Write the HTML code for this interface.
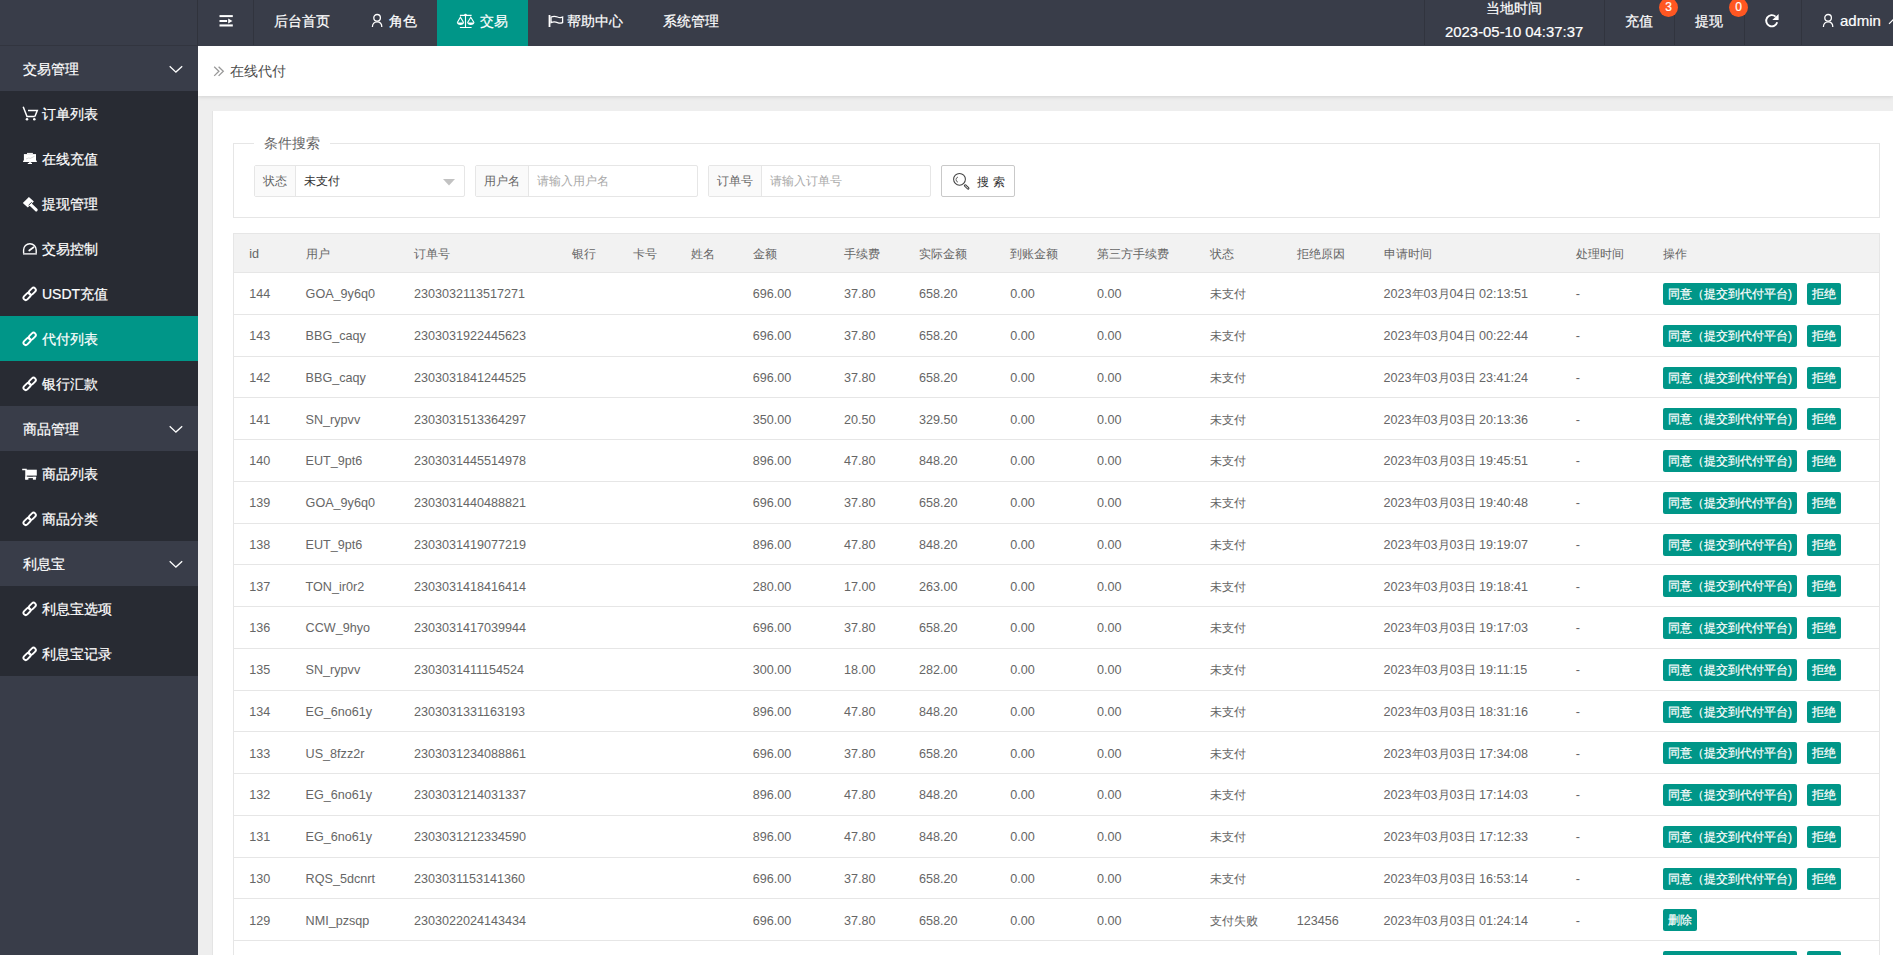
<!DOCTYPE html>
<html><head><meta charset="utf-8"><style>
*{margin:0;padding:0;box-sizing:border-box}
html,body{width:1893px;height:955px;overflow:hidden}
body{position:relative;background:#eeeeee;font-family:"Liberation Sans",sans-serif;color:#333}
#hdr,.sg,.si,.btn,.badge{-webkit-text-stroke:0.2px #fff}
.abs{position:absolute}
#hdr{position:absolute;left:0;top:0;width:1893px;height:46px;background:#393d49}
#logo{position:absolute;left:0;top:0;width:198px;height:46px;background:#393d49;border-bottom:1px solid #32353f}
.hv{position:absolute;top:0;width:1px;height:45px;background:#31343e}
.hm{position:absolute;top:0;height:46px;line-height:43px;color:#fff;font-size:14px;white-space:nowrap}
.hm svg{position:absolute}
#side{position:absolute;left:0;top:46px;width:198px;height:909px;background:#393d49}
.sg{position:absolute;left:0;width:198px;height:45px;background:#393d49}
.sg .st{position:absolute;left:23px;top:1px;line-height:45px;font-size:14px;color:#fff}
.sg .chev{position:absolute;left:168px;top:19px}
.si{position:absolute;left:0;width:198px;height:45px;background:#282b33}
.si.act{background:#009688}
.si .ic{position:absolute;left:23px;top:16px}
.si .st2{position:absolute;left:42px;top:1px;line-height:45px;font-size:14px;color:#fff}
#crumb{position:absolute;left:198px;top:46px;width:1695px;height:50px;background:#fff;box-shadow:0 1px 4px rgba(0,0,0,.12)}
#crumb .t{position:absolute;left:32px;top:0;line-height:50px;font-size:14px;color:#4d4d4d}
#card{position:absolute;left:213px;top:111px;width:1700px;height:900px;background:#fff;box-shadow:-1px 0 0 #e4e4e4}
#fs{position:absolute;left:233px;top:143px;width:1647px;height:75px;border:1px solid #e6e6e6}
#legend{position:absolute;left:254px;top:134px;width:76px;height:18px;background:#fff;font-size:14px;color:#666;line-height:18px;padding-left:10px}
.ig{position:absolute;top:165px;height:32px;border:1px solid #e6e6e6;border-radius:2px;background:#fff}
.ig .lb{position:absolute;left:0;top:0;height:30px;background:#fafafa;border-right:1px solid #e6e6e6;font-size:12px;color:#666;line-height:30px;text-align:center}
.ig .vl{position:absolute;top:0;line-height:30px;font-size:12px;white-space:nowrap}
#sbtn{position:absolute;left:941px;top:165px;width:74px;height:32px;border:1px solid #c9c9c9;border-radius:2px;background:#fff;font-size:12.6px;color:#333;line-height:30px}
.thead{position:absolute;left:233px;top:233px;width:1647px;height:40px;background:#f2f2f2;border:1px solid #e6e6e6}
#tbody{position:absolute;left:233px;top:272px;width:1647px;height:700px;border-left:1px solid #e6e6e6;border-right:1px solid #e6e6e6}
.th{position:absolute;top:243.5px;line-height:20px;font-size:12.6px;color:#666;white-space:nowrap}
.td{position:absolute;line-height:20px;font-size:12.6px;color:#666;white-space:nowrap}
.th .c,.td .c{font-size:11.7px}
.rowline{position:absolute;left:233px;width:1647px;height:1px;background:#e6e6e6}
.btn{position:absolute;height:22px;line-height:22px;padding:0 5px;background:#009688;color:#fff;font-size:12px;border-radius:2px;white-space:nowrap}
.b1{width:134px}
.b2{width:33.7px}
.badge{position:absolute;width:19px;height:19px;border-radius:50%;background:#ff5722;color:#fff;font-size:12px;line-height:19px;text-align:center}
</style></head><body>
<div id="card"></div>
<div id="crumb"><svg class="abs" style="left:14px;top:18px" width="14" height="14" viewBox="0 0 14 14"><path d="M2.2 2.7 L6.9 7.3 L2.2 11.9 M6.6 2.7 L11.3 7.3 L6.6 11.9" fill="none" stroke="#999" stroke-width="1.3"/></svg><span class="t">在线代付</span></div>
<div id="hdr">
 <div id="logo"></div>
 <div class="hv" style="left:197px"></div>
 <div class="hv" style="left:253px"></div>
 <svg class="abs" style="left:219px;top:15px" width="15" height="13" viewBox="0 0 15 13"><rect x="0.5" y="0.1" width="13.3" height="2" fill="#fff"/><rect x="0.5" y="5" width="7.6" height="2" fill="#fff"/><path d="M9.2 3.6 L13.5 6 L9.2 8.4 Z" fill="#fff"/><rect x="0.5" y="9.4" width="13.3" height="2.1" fill="#fff"/></svg>
 <div class="hm" style="left:274px">后台首页</div>
 <svg class="abs" style="left:370px;top:12px" width="15" height="16" viewBox="0 0 15 16"><circle cx="7.1" cy="5.8" r="3.3" fill="none" stroke="#fff" stroke-width="1.3"/><path d="M2.4 15 C2.4 11.6 4.4 9.8 7.1 9.8 C9.8 9.8 11.8 11.6 11.8 15" fill="none" stroke="#fff" stroke-width="1.3"/></svg>
 <div class="hm" style="left:389px">角色</div>
 <div class="abs" style="left:437px;top:0;width:91px;height:46px;background:#009688"></div>
 <svg class="abs" style="left:455px;top:12px" width="22" height="18" viewBox="0 0 22 18"><g fill="none" stroke="#fff" stroke-width="1.1"><path d="M10.5 3 V15.5 M4.9 15.5 H16.6 M4.9 3.4 H16.6"/><path d="M2.2 10.7 L5.4 5.2 L8.7 10.7"/><path d="M12.5 10.7 L15.8 5.2 L19.1 10.7"/></g><path d="M2 10.6 A3.45 2.3 0 0 0 8.9 10.6 Z M12.3 10.6 A3.45 2.3 0 0 0 19.3 10.6 Z" fill="#fff"/><circle cx="10.5" cy="3.1" r="1.3" fill="#fff"/></svg>
 <div class="hm" style="left:480px">交易</div>
 <svg class="abs" style="left:546px;top:12px" width="20" height="18" viewBox="0 0 20 18"><path d="M3.5 3 V15" stroke="#fff" stroke-width="1.8"/><path d="M5 5 C7.5 4 9.5 4.2 11.5 5 C13.5 5.8 15 5.8 16.6 5 V10.6 C15 11.4 13.5 11.4 11.5 10.6 C9.5 9.8 7.5 9.6 5 10.6 Z" fill="none" stroke="#fff" stroke-width="1.3"/></svg>
 <div class="hm" style="left:567px">帮助中心</div>
 <div class="hm" style="left:663px">系统管理</div>
 <div class="hv" style="left:1424px"></div>
 <div class="abs" style="left:1486px;top:0px;font-size:14px;color:#fff;line-height:16px">当地时间</div>
 <div class="abs" style="left:1445px;top:23px;font-size:14.9px;color:#fff;line-height:18px;white-space:nowrap">2023-05-10 04:37:37</div>
 <div class="hv" style="left:1604px"></div>
 <div class="hm" style="left:1625px">充值</div>
 <div class="hv" style="left:1674px"></div>
 <div class="hm" style="left:1695px">提现</div>
 <div class="hv" style="left:1744px"></div>
 <svg class="abs" style="left:1762px;top:10px" width="20" height="20" viewBox="0 0 20 20"><path d="M13.6 6.6 A5.6 5.6 0 1 0 15.2 12.2" fill="none" stroke="#fff" stroke-width="1.9"/><path d="M16.6 3.9 V10 H10.3 Z" fill="#fff"/></svg>
 <div class="hv" style="left:1801px"></div>
 <svg class="abs" style="left:1821px;top:12px" width="15" height="16" viewBox="0 0 15 16"><circle cx="7.1" cy="5.8" r="3.3" fill="none" stroke="#fff" stroke-width="1.3"/><path d="M2.4 15 C2.4 11.6 4.4 9.8 7.1 9.8 C9.8 9.8 11.8 11.6 11.8 15" fill="none" stroke="#fff" stroke-width="1.3"/></svg>
 <div class="hm" style="left:1840px;top:-1px;font-size:15px">admin</div>
 <svg class="abs" style="left:1888px;top:18px" width="8" height="8" viewBox="0 0 8 8"><path d="M1 5.8 L5 1.8 L9 5.8" fill="none" stroke="#fff" stroke-width="1.2"/></svg>
 <div class="badge" style="left:1659px;top:-2.5px">3</div>
 <div class="badge" style="left:1729px;top:-2.5px">0</div>
</div>
<div id="side">

</div>

<div id="sidewrap" class="abs" style="left:0;top:0">
<div class="sg" style="top:46px"><span class="st">交易管理</span><svg class="chev" width="16" height="10" viewBox="0 0 16 10"><path d="M1.7 1.3 L7.9 7.1 L14.2 1.3" fill="none" stroke="#fff" stroke-width="1.3"/></svg></div><div class="si" style="top:91px"><svg class="ic" style="left:21px;top:12px" width="18" height="19" viewBox="0 0 18 19"><g fill="none" stroke="#fff" stroke-width="1.5"><path d="M2.2 3.8 L6 13.6 H13.8"/><path d="M7 7.4 H16.3 L13.9 13.6"/></g><circle cx="6" cy="16.3" r="1.3" fill="#fff"/><circle cx="13.3" cy="16.3" r="1.3" fill="#fff"/></svg><span class="st2">订单列表</span></div><div class="si" style="top:136px"><svg class="ic" style="left:21px;top:12px" width="18" height="18" viewBox="0 0 18 18"><rect x="2.9" y="6.1" width="12.1" height="7.2" fill="#fff"/><rect x="6" y="4.9" width="5.9" height="1.4" fill="#eee"/><rect x="2.1" y="12.6" width="13.7" height="1.4" fill="#fff"/><rect x="7.9" y="13.8" width="2.3" height="1.3" fill="#ddd"/><rect x="6.8" y="15" width="4.2" height="1" fill="#fff"/><path d="M5 11 L7.5 10 L9.5 10.3 L13.5 8.3" fill="none" stroke="#bbb" stroke-width="0.6"/></svg><span class="st2">在线充值</span></div><div class="si" style="top:181px"><svg class="ic" style="left:18px;top:12px" width="22" height="20" viewBox="0 0 22 20"><path d="M4.8 10 L10.9 4 L15.9 8.6 L9.8 14.4 Z" fill="#fff"/><path d="M12.2 11.2 L18.2 16.9" stroke="#fff" stroke-width="3" stroke-linecap="round"/><path d="M10.6 12.2 L13.8 9.2" stroke="#282b33" stroke-width="0.9"/></svg><span class="st2">提现管理</span></div><div class="si" style="top:226px"><svg class="ic" style="left:18px;top:12px" width="22" height="20" viewBox="0 0 22 20"><path d="M5.6 15.6 V12 A6.3 6.3 0 0 1 18.2 12 V15.6" fill="none" stroke="#fff" stroke-width="1.4"/><rect x="5" y="15" width="13.9" height="1.7" fill="#cfcfd2"/><path d="M11.2 12.5 L15.6 9.2" stroke="#fff" stroke-width="1.7" stroke-linecap="round"/></svg><span class="st2">交易控制</span></div><div class="si" style="top:271px"><svg class="ic" style="left:21px;top:13px" width="18" height="18" viewBox="0 0 18 18"><g fill="none" stroke="#fff" stroke-width="1.9"><rect x="-4.05" y="-2.25" width="8.1" height="4.5" rx="2.25" transform="translate(11.27 7.23) rotate(-45)"/><rect x="-4.05" y="-2.25" width="8.1" height="4.5" rx="2.25" transform="translate(6.03 12.47) rotate(-45)"/></g></svg><span class="st2">USDT充值</span></div><div class="si act" style="top:316px"><svg class="ic" style="left:21px;top:13px" width="18" height="18" viewBox="0 0 18 18"><g fill="none" stroke="#fff" stroke-width="1.9"><rect x="-4.05" y="-2.25" width="8.1" height="4.5" rx="2.25" transform="translate(11.27 7.23) rotate(-45)"/><rect x="-4.05" y="-2.25" width="8.1" height="4.5" rx="2.25" transform="translate(6.03 12.47) rotate(-45)"/></g></svg><span class="st2">代付列表</span></div><div class="si" style="top:361px"><svg class="ic" style="left:21px;top:13px" width="18" height="18" viewBox="0 0 18 18"><g fill="none" stroke="#fff" stroke-width="1.9"><rect x="-4.05" y="-2.25" width="8.1" height="4.5" rx="2.25" transform="translate(11.27 7.23) rotate(-45)"/><rect x="-4.05" y="-2.25" width="8.1" height="4.5" rx="2.25" transform="translate(6.03 12.47) rotate(-45)"/></g></svg><span class="st2">银行汇款</span></div><div class="sg" style="top:406px"><span class="st">商品管理</span><svg class="chev" width="16" height="10" viewBox="0 0 16 10"><path d="M1.7 1.3 L7.9 7.1 L14.2 1.3" fill="none" stroke="#fff" stroke-width="1.3"/></svg></div><div class="si" style="top:451px"><svg class="ic" style="left:18px;top:12px" width="22" height="20" viewBox="0 0 22 20"><path d="M4.2 6.4 H8 V16.6" fill="none" stroke="#fff" stroke-width="1.5"/><rect x="8" y="6.7" width="10.8" height="5.9" fill="#fff"/><rect x="8" y="13.8" width="10.2" height="1.3" fill="#fff"/><rect x="7.3" y="13.8" width="3.1" height="2.9" fill="#fff"/><rect x="14.9" y="13.8" width="3" height="2.9" fill="#fff"/></svg><span class="st2">商品列表</span></div><div class="si" style="top:496px"><svg class="ic" style="left:21px;top:13px" width="18" height="18" viewBox="0 0 18 18"><g fill="none" stroke="#fff" stroke-width="1.9"><rect x="-4.05" y="-2.25" width="8.1" height="4.5" rx="2.25" transform="translate(11.27 7.23) rotate(-45)"/><rect x="-4.05" y="-2.25" width="8.1" height="4.5" rx="2.25" transform="translate(6.03 12.47) rotate(-45)"/></g></svg><span class="st2">商品分类</span></div><div class="sg" style="top:541px"><span class="st">利息宝</span><svg class="chev" width="16" height="10" viewBox="0 0 16 10"><path d="M1.7 1.3 L7.9 7.1 L14.2 1.3" fill="none" stroke="#fff" stroke-width="1.3"/></svg></div><div class="si" style="top:586px"><svg class="ic" style="left:21px;top:13px" width="18" height="18" viewBox="0 0 18 18"><g fill="none" stroke="#fff" stroke-width="1.9"><rect x="-4.05" y="-2.25" width="8.1" height="4.5" rx="2.25" transform="translate(11.27 7.23) rotate(-45)"/><rect x="-4.05" y="-2.25" width="8.1" height="4.5" rx="2.25" transform="translate(6.03 12.47) rotate(-45)"/></g></svg><span class="st2">利息宝选项</span></div><div class="si" style="top:631px"><svg class="ic" style="left:21px;top:13px" width="18" height="18" viewBox="0 0 18 18"><g fill="none" stroke="#fff" stroke-width="1.9"><rect x="-4.05" y="-2.25" width="8.1" height="4.5" rx="2.25" transform="translate(11.27 7.23) rotate(-45)"/><rect x="-4.05" y="-2.25" width="8.1" height="4.5" rx="2.25" transform="translate(6.03 12.47) rotate(-45)"/></g></svg><span class="st2">利息宝记录</span></div>
</div>
<div class="abs" style="left:197px;top:0;width:1px;height:46px;background:#30333c"></div>
<div id="fs"></div>
<div id="legend">条件搜索</div>
<div class="ig" style="left:254px;width:211px"><div class="lb" style="width:41px">状态</div><div class="vl" style="left:49px;color:#333">未支付</div>
 <svg class="abs" style="left:188px;top:12.5px" width="12" height="7" viewBox="0 0 12 7"><path d="M0 0 H12 L6 6.5 Z" fill="#c2c2c2"/></svg></div>
<div class="ig" style="left:475px;width:223px"><div class="lb" style="width:53px">用户名</div><div class="vl" style="left:61px;color:#a9a9a9">请输入用户名</div></div>
<div class="ig" style="left:708px;width:223px"><div class="lb" style="width:53px">订单号</div><div class="vl" style="left:61px;color:#a9a9a9">请输入订单号</div></div>
<div id="sbtn"><svg class="abs" style="left:8px;top:4px" width="22" height="22" viewBox="0 0 22 22"><circle cx="9.5" cy="9.3" r="5.9" fill="none" stroke="#444" stroke-width="1.05"/><path d="M15.2 15.6 L18.1 18.3" stroke="#444" stroke-width="2.7" stroke-linecap="round"/><path d="M15.4 15.8 L17.9 18.1" stroke="#fff" stroke-width="0.9" stroke-linecap="round"/><path d="M8 7 A2.7 2.7 0 0 0 8 12.2" fill="none" stroke="#555" stroke-width="0.9"/></svg><span class="abs" style="left:34.5px;top:0.5px;letter-spacing:4px;font-size:12px">搜索</span></div>
<div id="tbody"></div>
<div class="thead"></div><div class="th" style="left:249.3px">id</div><div class="th" style="left:305.6px"><span class="c">用户</span></div><div class="th" style="left:413.9px"><span class="c">订单号</span></div><div class="th" style="left:571.8px"><span class="c">银行</span></div><div class="th" style="left:632.5px"><span class="c">卡号</span></div><div class="th" style="left:691.2px"><span class="c">姓名</span></div><div class="th" style="left:752.7px"><span class="c">金额</span></div><div class="th" style="left:843.9px"><span class="c">手续费</span></div><div class="th" style="left:919.1px"><span class="c">实际金额</span></div><div class="th" style="left:1010.3px"><span class="c">到账金额</span></div><div class="th" style="left:1096.9px"><span class="c">第三方手续费</span></div><div class="th" style="left:1209.7px"><span class="c">状态</span></div><div class="th" style="left:1296.8px"><span class="c">拒绝原因</span></div><div class="th" style="left:1383.5px"><span class="c">申请时间</span></div><div class="th" style="left:1575.8px"><span class="c">处理时间</span></div><div class="th" style="left:1662.9px"><span class="c">操作</span></div><div class="rowline" style="top:314px"></div><div class="td" style="left:249.3px;top:284px">144</div><div class="td" style="left:305.6px;top:284px">GOA_9y6q0</div><div class="td" style="left:413.9px;top:284px">2303032113517271</div><div class="td" style="left:752.7px;top:284px">696.00</div><div class="td" style="left:843.9px;top:284px">37.80</div><div class="td" style="left:919.1px;top:284px">658.20</div><div class="td" style="left:1010.3px;top:284px">0.00</div><div class="td" style="left:1096.9px;top:284px">0.00</div><div class="td" style="left:1209.7px;top:284px"><span class="c">未支付</span></div><div class="td" style="left:1383.5px;top:284px">2023<span class="c">年</span>03<span class="c">月</span>04<span class="c">日</span> 02:13:51</div><div class="td" style="left:1575.8px;top:284px">-</div><div class="btn b1" style="left:1662.9px;top:283.30px">同意（提交到代付平台)</div><div class="btn b2" style="left:1807px;top:283.30px">拒绝</div><div class="rowline" style="top:356px"></div><div class="td" style="left:249.3px;top:326px">143</div><div class="td" style="left:305.6px;top:326px">BBG_caqy</div><div class="td" style="left:413.9px;top:326px">2303031922445623</div><div class="td" style="left:752.7px;top:326px">696.00</div><div class="td" style="left:843.9px;top:326px">37.80</div><div class="td" style="left:919.1px;top:326px">658.20</div><div class="td" style="left:1010.3px;top:326px">0.00</div><div class="td" style="left:1096.9px;top:326px">0.00</div><div class="td" style="left:1209.7px;top:326px"><span class="c">未支付</span></div><div class="td" style="left:1383.5px;top:326px">2023<span class="c">年</span>03<span class="c">月</span>04<span class="c">日</span> 00:22:44</div><div class="td" style="left:1575.8px;top:326px">-</div><div class="btn b1" style="left:1662.9px;top:325.30px">同意（提交到代付平台)</div><div class="btn b2" style="left:1807px;top:325.30px">拒绝</div><div class="rowline" style="top:397px"></div><div class="td" style="left:249.3px;top:368px">142</div><div class="td" style="left:305.6px;top:368px">BBG_caqy</div><div class="td" style="left:413.9px;top:368px">2303031841244525</div><div class="td" style="left:752.7px;top:368px">696.00</div><div class="td" style="left:843.9px;top:368px">37.80</div><div class="td" style="left:919.1px;top:368px">658.20</div><div class="td" style="left:1010.3px;top:368px">0.00</div><div class="td" style="left:1096.9px;top:368px">0.00</div><div class="td" style="left:1209.7px;top:368px"><span class="c">未支付</span></div><div class="td" style="left:1383.5px;top:368px">2023<span class="c">年</span>03<span class="c">月</span>03<span class="c">日</span> 23:41:24</div><div class="td" style="left:1575.8px;top:368px">-</div><div class="btn b1" style="left:1662.9px;top:366.80px">同意（提交到代付平台)</div><div class="btn b2" style="left:1807px;top:366.80px">拒绝</div><div class="rowline" style="top:439px"></div><div class="td" style="left:249.3px;top:410px">141</div><div class="td" style="left:305.6px;top:410px">SN_rypvv</div><div class="td" style="left:413.9px;top:410px">2303031513364297</div><div class="td" style="left:752.7px;top:410px">350.00</div><div class="td" style="left:843.9px;top:410px">20.50</div><div class="td" style="left:919.1px;top:410px">329.50</div><div class="td" style="left:1010.3px;top:410px">0.00</div><div class="td" style="left:1096.9px;top:410px">0.00</div><div class="td" style="left:1209.7px;top:410px"><span class="c">未支付</span></div><div class="td" style="left:1383.5px;top:410px">2023<span class="c">年</span>03<span class="c">月</span>03<span class="c">日</span> 20:13:36</div><div class="td" style="left:1575.8px;top:410px">-</div><div class="btn b1" style="left:1662.9px;top:408.30px">同意（提交到代付平台)</div><div class="btn b2" style="left:1807px;top:408.30px">拒绝</div><div class="rowline" style="top:481px"></div><div class="td" style="left:249.3px;top:451px">140</div><div class="td" style="left:305.6px;top:451px">EUT_9pt6</div><div class="td" style="left:413.9px;top:451px">2303031445514978</div><div class="td" style="left:752.7px;top:451px">896.00</div><div class="td" style="left:843.9px;top:451px">47.80</div><div class="td" style="left:919.1px;top:451px">848.20</div><div class="td" style="left:1010.3px;top:451px">0.00</div><div class="td" style="left:1096.9px;top:451px">0.00</div><div class="td" style="left:1209.7px;top:451px"><span class="c">未支付</span></div><div class="td" style="left:1383.5px;top:451px">2023<span class="c">年</span>03<span class="c">月</span>03<span class="c">日</span> 19:45:51</div><div class="td" style="left:1575.8px;top:451px">-</div><div class="btn b1" style="left:1662.9px;top:450.30px">同意（提交到代付平台)</div><div class="btn b2" style="left:1807px;top:450.30px">拒绝</div><div class="rowline" style="top:523px"></div><div class="td" style="left:249.3px;top:493px">139</div><div class="td" style="left:305.6px;top:493px">GOA_9y6q0</div><div class="td" style="left:413.9px;top:493px">2303031440488821</div><div class="td" style="left:752.7px;top:493px">696.00</div><div class="td" style="left:843.9px;top:493px">37.80</div><div class="td" style="left:919.1px;top:493px">658.20</div><div class="td" style="left:1010.3px;top:493px">0.00</div><div class="td" style="left:1096.9px;top:493px">0.00</div><div class="td" style="left:1209.7px;top:493px"><span class="c">未支付</span></div><div class="td" style="left:1383.5px;top:493px">2023<span class="c">年</span>03<span class="c">月</span>03<span class="c">日</span> 19:40:48</div><div class="td" style="left:1575.8px;top:493px">-</div><div class="btn b1" style="left:1662.9px;top:492.30px">同意（提交到代付平台)</div><div class="btn b2" style="left:1807px;top:492.30px">拒绝</div><div class="rowline" style="top:564px"></div><div class="td" style="left:249.3px;top:535px">138</div><div class="td" style="left:305.6px;top:535px">EUT_9pt6</div><div class="td" style="left:413.9px;top:535px">2303031419077219</div><div class="td" style="left:752.7px;top:535px">896.00</div><div class="td" style="left:843.9px;top:535px">47.80</div><div class="td" style="left:919.1px;top:535px">848.20</div><div class="td" style="left:1010.3px;top:535px">0.00</div><div class="td" style="left:1096.9px;top:535px">0.00</div><div class="td" style="left:1209.7px;top:535px"><span class="c">未支付</span></div><div class="td" style="left:1383.5px;top:535px">2023<span class="c">年</span>03<span class="c">月</span>03<span class="c">日</span> 19:19:07</div><div class="td" style="left:1575.8px;top:535px">-</div><div class="btn b1" style="left:1662.9px;top:533.80px">同意（提交到代付平台)</div><div class="btn b2" style="left:1807px;top:533.80px">拒绝</div><div class="rowline" style="top:606px"></div><div class="td" style="left:249.3px;top:577px">137</div><div class="td" style="left:305.6px;top:577px">TON_ir0r2</div><div class="td" style="left:413.9px;top:577px">2303031418416414</div><div class="td" style="left:752.7px;top:577px">280.00</div><div class="td" style="left:843.9px;top:577px">17.00</div><div class="td" style="left:919.1px;top:577px">263.00</div><div class="td" style="left:1010.3px;top:577px">0.00</div><div class="td" style="left:1096.9px;top:577px">0.00</div><div class="td" style="left:1209.7px;top:577px"><span class="c">未支付</span></div><div class="td" style="left:1383.5px;top:577px">2023<span class="c">年</span>03<span class="c">月</span>03<span class="c">日</span> 19:18:41</div><div class="td" style="left:1575.8px;top:577px">-</div><div class="btn b1" style="left:1662.9px;top:575.30px">同意（提交到代付平台)</div><div class="btn b2" style="left:1807px;top:575.30px">拒绝</div><div class="rowline" style="top:648px"></div><div class="td" style="left:249.3px;top:618px">136</div><div class="td" style="left:305.6px;top:618px">CCW_9hyo</div><div class="td" style="left:413.9px;top:618px">2303031417039944</div><div class="td" style="left:752.7px;top:618px">696.00</div><div class="td" style="left:843.9px;top:618px">37.80</div><div class="td" style="left:919.1px;top:618px">658.20</div><div class="td" style="left:1010.3px;top:618px">0.00</div><div class="td" style="left:1096.9px;top:618px">0.00</div><div class="td" style="left:1209.7px;top:618px"><span class="c">未支付</span></div><div class="td" style="left:1383.5px;top:618px">2023<span class="c">年</span>03<span class="c">月</span>03<span class="c">日</span> 19:17:03</div><div class="td" style="left:1575.8px;top:618px">-</div><div class="btn b1" style="left:1662.9px;top:617.30px">同意（提交到代付平台)</div><div class="btn b2" style="left:1807px;top:617.30px">拒绝</div><div class="rowline" style="top:690px"></div><div class="td" style="left:249.3px;top:660px">135</div><div class="td" style="left:305.6px;top:660px">SN_rypvv</div><div class="td" style="left:413.9px;top:660px">2303031411154524</div><div class="td" style="left:752.7px;top:660px">300.00</div><div class="td" style="left:843.9px;top:660px">18.00</div><div class="td" style="left:919.1px;top:660px">282.00</div><div class="td" style="left:1010.3px;top:660px">0.00</div><div class="td" style="left:1096.9px;top:660px">0.00</div><div class="td" style="left:1209.7px;top:660px"><span class="c">未支付</span></div><div class="td" style="left:1383.5px;top:660px">2023<span class="c">年</span>03<span class="c">月</span>03<span class="c">日</span> 19:11:15</div><div class="td" style="left:1575.8px;top:660px">-</div><div class="btn b1" style="left:1662.9px;top:659.30px">同意（提交到代付平台)</div><div class="btn b2" style="left:1807px;top:659.30px">拒绝</div><div class="rowline" style="top:731px"></div><div class="td" style="left:249.3px;top:702px">134</div><div class="td" style="left:305.6px;top:702px">EG_6no61y</div><div class="td" style="left:413.9px;top:702px">2303031331163193</div><div class="td" style="left:752.7px;top:702px">896.00</div><div class="td" style="left:843.9px;top:702px">47.80</div><div class="td" style="left:919.1px;top:702px">848.20</div><div class="td" style="left:1010.3px;top:702px">0.00</div><div class="td" style="left:1096.9px;top:702px">0.00</div><div class="td" style="left:1209.7px;top:702px"><span class="c">未支付</span></div><div class="td" style="left:1383.5px;top:702px">2023<span class="c">年</span>03<span class="c">月</span>03<span class="c">日</span> 18:31:16</div><div class="td" style="left:1575.8px;top:702px">-</div><div class="btn b1" style="left:1662.9px;top:700.80px">同意（提交到代付平台)</div><div class="btn b2" style="left:1807px;top:700.80px">拒绝</div><div class="rowline" style="top:773px"></div><div class="td" style="left:249.3px;top:744px">133</div><div class="td" style="left:305.6px;top:744px">US_8fzz2r</div><div class="td" style="left:413.9px;top:744px">2303031234088861</div><div class="td" style="left:752.7px;top:744px">696.00</div><div class="td" style="left:843.9px;top:744px">37.80</div><div class="td" style="left:919.1px;top:744px">658.20</div><div class="td" style="left:1010.3px;top:744px">0.00</div><div class="td" style="left:1096.9px;top:744px">0.00</div><div class="td" style="left:1209.7px;top:744px"><span class="c">未支付</span></div><div class="td" style="left:1383.5px;top:744px">2023<span class="c">年</span>03<span class="c">月</span>03<span class="c">日</span> 17:34:08</div><div class="td" style="left:1575.8px;top:744px">-</div><div class="btn b1" style="left:1662.9px;top:742.30px">同意（提交到代付平台)</div><div class="btn b2" style="left:1807px;top:742.30px">拒绝</div><div class="rowline" style="top:815px"></div><div class="td" style="left:249.3px;top:785px">132</div><div class="td" style="left:305.6px;top:785px">EG_6no61y</div><div class="td" style="left:413.9px;top:785px">2303031214031337</div><div class="td" style="left:752.7px;top:785px">896.00</div><div class="td" style="left:843.9px;top:785px">47.80</div><div class="td" style="left:919.1px;top:785px">848.20</div><div class="td" style="left:1010.3px;top:785px">0.00</div><div class="td" style="left:1096.9px;top:785px">0.00</div><div class="td" style="left:1209.7px;top:785px"><span class="c">未支付</span></div><div class="td" style="left:1383.5px;top:785px">2023<span class="c">年</span>03<span class="c">月</span>03<span class="c">日</span> 17:14:03</div><div class="td" style="left:1575.8px;top:785px">-</div><div class="btn b1" style="left:1662.9px;top:784.30px">同意（提交到代付平台)</div><div class="btn b2" style="left:1807px;top:784.30px">拒绝</div><div class="rowline" style="top:857px"></div><div class="td" style="left:249.3px;top:827px">131</div><div class="td" style="left:305.6px;top:827px">EG_6no61y</div><div class="td" style="left:413.9px;top:827px">2303031212334590</div><div class="td" style="left:752.7px;top:827px">896.00</div><div class="td" style="left:843.9px;top:827px">47.80</div><div class="td" style="left:919.1px;top:827px">848.20</div><div class="td" style="left:1010.3px;top:827px">0.00</div><div class="td" style="left:1096.9px;top:827px">0.00</div><div class="td" style="left:1209.7px;top:827px"><span class="c">未支付</span></div><div class="td" style="left:1383.5px;top:827px">2023<span class="c">年</span>03<span class="c">月</span>03<span class="c">日</span> 17:12:33</div><div class="td" style="left:1575.8px;top:827px">-</div><div class="btn b1" style="left:1662.9px;top:826.30px">同意（提交到代付平台)</div><div class="btn b2" style="left:1807px;top:826.30px">拒绝</div><div class="rowline" style="top:898px"></div><div class="td" style="left:249.3px;top:869px">130</div><div class="td" style="left:305.6px;top:869px">RQS_5dcnrt</div><div class="td" style="left:413.9px;top:869px">2303031153141360</div><div class="td" style="left:752.7px;top:869px">696.00</div><div class="td" style="left:843.9px;top:869px">37.80</div><div class="td" style="left:919.1px;top:869px">658.20</div><div class="td" style="left:1010.3px;top:869px">0.00</div><div class="td" style="left:1096.9px;top:869px">0.00</div><div class="td" style="left:1209.7px;top:869px"><span class="c">未支付</span></div><div class="td" style="left:1383.5px;top:869px">2023<span class="c">年</span>03<span class="c">月</span>03<span class="c">日</span> 16:53:14</div><div class="td" style="left:1575.8px;top:869px">-</div><div class="btn b1" style="left:1662.9px;top:867.80px">同意（提交到代付平台)</div><div class="btn b2" style="left:1807px;top:867.80px">拒绝</div><div class="rowline" style="top:940px"></div><div class="td" style="left:249.3px;top:911px">129</div><div class="td" style="left:305.6px;top:911px">NMI_pzsqp</div><div class="td" style="left:413.9px;top:911px">2303022024143434</div><div class="td" style="left:752.7px;top:911px">696.00</div><div class="td" style="left:843.9px;top:911px">37.80</div><div class="td" style="left:919.1px;top:911px">658.20</div><div class="td" style="left:1010.3px;top:911px">0.00</div><div class="td" style="left:1096.9px;top:911px">0.00</div><div class="td" style="left:1209.7px;top:911px"><span class="c">支付失败</span></div><div class="td" style="left:1296.8px;top:911px">123456</div><div class="td" style="left:1383.5px;top:911px">2023<span class="c">年</span>03<span class="c">月</span>03<span class="c">日</span> 01:24:14</div><div class="td" style="left:1575.8px;top:911px">-</div><div class="btn" style="left:1662.9px;top:909.30px">删除</div><div class="rowline" style="top:982px"></div><div class="td" style="left:249.3px;top:952px">128</div><div class="td" style="left:1010.3px;top:952px">0.00</div><div class="td" style="left:1096.9px;top:952px">0.00</div><div class="td" style="left:1575.8px;top:952px">-</div><div class="btn b1" style="left:1662.9px;top:951.30px">同意（提交到代付平台)</div><div class="btn b2" style="left:1807px;top:951.30px">拒绝</div>
</body></html>
